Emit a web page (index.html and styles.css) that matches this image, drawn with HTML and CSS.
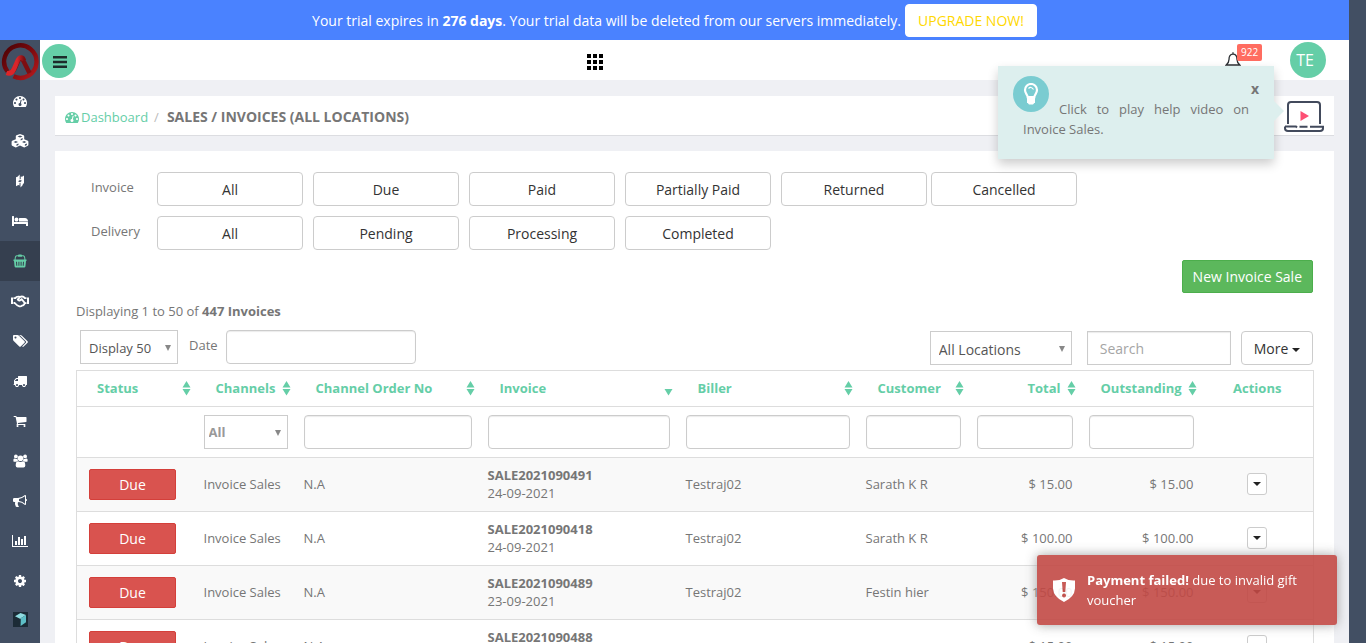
FILE: index.html
```html
<!DOCTYPE html>
<html lang="en">
<head>
<meta charset="utf-8">
<title>Sales / Invoices</title>
<link rel="stylesheet" href="styles.css">
</head>
<body>
<svg class="defs" aria-hidden="true">
  <symbol id="tach" viewBox="0 0 1792 1792"><path d="M384 1152q0-53-37.500-90.500t-90.500-37.500-90.500 37.500-37.500 90.500 37.500 90.500 90.500 37.500 90.500-37.500 37.500-90.500zm192-448q0-53-37.500-90.500t-90.500-37.500-90.500 37.500-37.500 90.500 37.500 90.500 90.500 37.500 90.500-37.500 37.500-90.500zm428 481l101-382q6-26-7.500-48.500t-38.500-29.500-48 6.500-30 39.500l-101 382q-60 5-107 43.500t-63 98.500q-20 77 20 146t117 89 146-20 89-117q16-60-6-117t-72-91zm660-33q0-53-37.500-90.500t-90.500-37.500-90.500 37.500-37.500 90.500 37.500 90.500 90.500 37.500 90.500-37.500 37.500-90.500zm-640-640q0-53-37.500-90.500t-90.500-37.500-90.500 37.500-37.500 90.500 37.500 90.500 90.500 37.500 90.500-37.500 37.500-90.500zm448 192q0-53-37.500-90.500t-90.500-37.500-90.500 37.500-37.500 90.500 37.500 90.500 90.500 37.500 90.500-37.500 37.500-90.500zm320 448q0 261-141 483-19 29-54 29h-1402q-35 0-54-29-141-221-141-483 0-182 71-348t191-286 286-191 348-71 348 71 286 191 191 286 71 348z"/></symbol>
  <symbol id="sort" viewBox="0 0 9 16"><path d="M4.500 1 8.500 7.500h-8zM.500 9h8l-4 6.500z"/></symbol>
  <symbol id="sort-desc" viewBox="0 0 9 16"><path d="M.500 9h8l-4 6.500z"/></symbol>
</svg>

<div class="page">
  <div class="trial">
    <p>Your trial expires in <b>276 days</b>. Your trial data will be deleted from our servers immediately.</p>
    <a class="upgrade" href="#">UPGRADE NOW!</a>
  </div>

  <div class="shell">
    <nav class="sidebar" aria-label="Main">
      <a class="logo" href="#" aria-label="Home">
        <svg viewBox="0 0 40 40" width="40" height="40">
          <defs>
            <linearGradient id="ring" x1="0" x2="1" y1="0" y2="1"><stop offset="0" stop-color="#4a0205"/><stop offset=".5" stop-color="#7c0a0e"/><stop offset="1" stop-color="#b81a1e"/></linearGradient>
            <linearGradient id="leg" x1="0" x2="1"><stop offset="0" stop-color="#e02327"/><stop offset=".6" stop-color="#d9262b"/><stop offset="1" stop-color="#7d0e11"/></linearGradient>
          </defs>
          <path d="M7.500 30.500A16.200 16.200 0 1 1 13.500 35.300" fill="none" stroke="url(#ring)" stroke-width="4.400"/>
          <path d="M9 31q3.500 1.500 6-4l3-7q2.500-5 5.500 0l6 12" fill="none" stroke="#7d0e11" stroke-width="4.500"/>
          <path d="M6.500 32q5 1.800 7.500-4l3.500-8q1.700-4 4-3.500 1.500.3 2.500 3" fill="none" stroke="url(#leg)" stroke-width="4.500"/>
        </svg>
      </a>
      <a href="#" aria-label="Dashboard"><svg width="14" height="14"><use href="#tach"/></svg></a>
      <a href="#" aria-label="Products"><svg viewBox="0 0 18 16" width="18" height="16"><path fill-rule="evenodd" d="M9 1l3.600 1.300q.6.300.6 1v3l3.600 1.500q.6.300.6 1v3q0 .7-.6 1l-3 1.500q-.6.300-1.200 0L9 12.500l-3.600 1.800q-.6.300-1.200 0l-3-1.500q-.6-.3-.6-1v-3q0-.7.6-1l3.600-1.500v-3q0-.7.6-1zM9 2.500 6.500 3.500 9 4.600l2.500-1.100zM9.700 7.400l2-.9V5l-2 .9zM4.800 8 2.600 9l2.200 1L7 9zM5.500 12.900l2-1v-1.500l-2 .9zM13.200 8 11 9l2.200 1 2.200-1zM13.900 12.900l2-1v-1.500l-2 .9z"/></svg></a>
      <a href="#" aria-label="Transfers"><svg viewBox="0 0 10 14" width="10" height="14"><path fill-rule="evenodd" d="M1 3.200 2.500 2.700 4.700.5v5l1-.6V2.500L7 2.800 9 1.500v7.700L7.800 10v1L5.500 13.500V8.700l-1 .6v2.200L3.300 11 1 12.200zM5 5.900 3 7.200 5 8.200 7 6.800z"/></svg></a>
      <a href="#" aria-label="Rooms"><svg viewBox="0 0 2048 1792" width="16" height="14"><path d="M256 1024h1728q26 0 45 19t19 45v448h-256v-256h-1536v256h-256v-1216q0-26 19-45t45-19h128q26 0 45 19t19 45v704zm576-320q0-106-75-181t-181-75-181 75-75 181 75 181 181 75 181-75 75-181zm1216 256v-64q0-159-112.500-271.500t-271.500-112.500h-704q-26 0-45 19t-19 45v384h1152z"/></svg></a>
      <a href="#" class="active" aria-label="Sales"><svg viewBox="0 0 14 14" width="14" height="14"><path fill-rule="evenodd" d="M1.600 5.500Q1.600 1.200 4 1.200h1Q5 .500 6 .500h2q1 0 1 .7h1q2.400 0 2.400 4.300h1.100v1.500h-.5l-.6 5.500q-.1 1-1.200 1H2.800q-1 0-1.200-1L1 7H.5V5.500zM2.600 5.500h8.800Q11.300 2.200 10 2.200H9V2.700H5V2.200H4Q2.700 2.200 2.600 5.500zM3 7.800l.3 4h1L4 7.800zM5.400 7.800v4h1v-4zM7.600 7.800v4h1v-4zM10 7.800l-.3 4h1l.3-4z"/></svg></a>
      <a href="#" aria-label="Partners"><svg viewBox="0 0 18 14" width="18" height="14"><path d="M0 3.500h2v6.500H0zM16 3.500h2V10h-2z"/><path d="M2.500 4.200h1.800Q5.500 2 9 2.800 12.500 1.800 13.800 4.200h1.700M2.500 9h1.200q2.300 2.700 4.700 3.300 1.600.4 2.600-.7 2.200 0 2.600-2.400h1.900M9 3.200 6.800 5.400q.6 1.600 2.400.9l1.500-1.100 3 3.700" fill="none" stroke="#fff" stroke-width="1.800"/></svg></a>
      <a href="#" aria-label="Offers"><svg viewBox="0 0 1920 1792" width="15" height="14"><path d="M448 448q0-53-37.500-90.500t-90.500-37.500-90.500 37.500-37.500 90.500 37.500 90.500 90.500 37.500 90.500-37.500 37.500-90.500zm1067 576q0 53-37 90l-491 492q-39 37-91 37-53 0-90-37l-715-716q-38-37-64.500-101t-26.500-117v-416q0-52 38-90t90-38h416q53 0 117 26.500t102 64.500l715 714q37 39 37 91zm384 0q0 53-37 90l-491 492q-39 37-91 37-36 0-59-14t-53-45l470-470q37-37 37-90 0-52-37-91l-715-714q-38-38-102-64.500t-117-26.500h224q53 0 117 26.500t102 64.500l715 714q37 39 37 91z"/></svg></a>
      <a href="#" aria-label="Shipping"><svg viewBox="0 0 1792 1792" width="14" height="14"><path d="M640 1408q0-52-38-90t-90-38-90 38-38 90 38 90 90 38 90-38 38-90zm-384-512h384v-256h-158q-13 0-22 9l-195 195q-9 9-9 22v30zm1280 512q0-52-38-90t-90-38-90 38-38 90 38 90 90 38 90-38 38-90zm256-1088v1024q0 15-4 26.500t-13.500 18.500-16.500 11.500-23.500 6-22.500 2-25.500 0-22.500-.5q0 106-75 181t-181 75-181-75-75-181h-384q0 106-75 181t-181 75-181-75-75-181h-64q-3 0-22.500.5t-25.500 0-22.500-2-23.500-6-16.500-11.500-13.500-18.500-4-26.500q0-26 19-45t45-19v-320q0-8-.5-35t0-38 2.500-34.500 6.500-37 14-30.500 22.500-30l198-198q19-19 50.500-32t58.500-13h160v-192q0-26 19-45t45-19h1024q26 0 45 19t19 45z"/></svg></a>
      <a href="#" aria-label="Purchases"><svg viewBox="0 0 1792 1792" width="14" height="14"><path d="M704 1536q0 52-38 90t-90 38-90-38-38-90 38-90 90-38 90 38 38 90zm896 0q0 52-38 90t-90 38-90-38-38-90 38-90 90-38 90 38 38 90zm128-1088v512q0 24-16.500 42.500t-40.500 21.500l-1044 122q13 60 13 70 0 16-24 64h920q26 0 45 19t19 45-19 45-45 19h-1024q-26 0-45-19t-19-45q0-11 8-31.500t16-36 21.500-40 15.500-29.500l-177-823h-204q-26 0-45-19t-19-45 19-45 45-19h256q16 0 28.500 6.500t19.500 15.500 13 24.500 8 26 5.500 29.500 4.500 26h1201q26 0 45 19t19 45z"/></svg></a>
      <a href="#" aria-label="Customers"><svg viewBox="0 0 15 14" width="15" height="14"><circle cx="2.900" cy="2.400" r="1.900"/><circle cx="12.100" cy="2.400" r="1.900"/><circle cx="7.500" cy="4.200" r="2.800"/><path d="M.5 7.500Q0 4.500 1.500 4.500q1.400.8 3 .2.100 1.300.7 2.100-1.200 0-1.900 1H1.500q-.8 0-1-.3zM14.500 7.500q.5-3-1-3-1.400.8-3 .2-.1 1.300-.7 2.100 1.200 0 1.900 1h1.800q.8 0 1-.3zM2.700 11.500q0-4.300 2.300-4.300 2.500 1.400 5 0 2.300 0 2.300 4.300 0 2-1.800 2h-6q-1.800 0-1.800-2z"/></svg></a>
      <a href="#" aria-label="Marketing"><svg viewBox="0 0 1792 1792" width="14" height="14"><path d="M1664 640q53 0 90.500 37.500t37.500 90.500-37.500 90.500-90.500 37.500v384q0 52-38 90t-90 38q-417-347-812-380-58 19-91 66t-31 100.500 40 92.500q-20 33-23 65.500t6 58 33.500 55 48 50 61.500 50.500q-29 58-111.500 83t-168.500 11.500-132-55.500q-7-23-29.500-87.500t-32-94.500-23-89-15-101 3.500-98.500 22-110.500h-122q-66 0-113-47t-47-113v-192q0-66 47-113t113-47h480q435 0 896-384 52 0 90 38t38 90v384zm-128 604v-954q-394 302-768 343v270q377 42 768 341z"/></svg></a>
      <a href="#" aria-label="Reports"><svg viewBox="0 0 2048 1792" width="16" height="14"><path d="M640 896v512h-256v-512h256zm384-512v1024h-256v-1024h256zm1024 1152v128h-2048v-1536h128v1408h1920zm-640-896v768h-256v-768h256zm384-384v1152h-256v-1152h256z"/></svg></a>
      <a href="#" aria-label="Settings"><svg viewBox="0 0 1792 1792" width="14" height="14"><path d="M1152 896q0-106-75-181t-181-75-181 75-75 181 75 181 181 75 181-75 75-181zm512-109v222q0 12-8 23t-20 13l-185 28q-19 54-39 91 35 50 107 138 10 12 10 25t-9 23q-27 37-99 108t-94 71q-12 0-26-9l-138-108q-44 23-91 38-16 136-29 186-7 28-36 28h-222q-14 0-24.500-8.500t-11.500-21.500l-28-184q-49-16-90-37l-141 107q-10 9-25 9-14 0-25-11-126-114-165-168-7-10-7-23 0-12 8-23 15-21 51-66.500t54-70.500q-27-50-41-99l-183-27q-13-2-21-12.500t-8-23.500v-222q0-12 8-23t19-13l186-28q14-46 39-92-40-57-107-138-10-12-10-24 0-10 9-23 26-36 98.500-107.500t94.500-71.500q13 0 26 10l138 107q44-23 91-38 16-136 29-186 7-28 36-28h222q14 0 24.500 8.500t11.500 21.500l28 184q49 16 90 37l142-107q9-9 24-9 13 0 25 10 129 119 165 170 7 8 7 22 0 12-8 23-15 21-51 66.500t-54 70.500q26 50 41 98l183 28q13 2 21 12.500t8 23.500z"/></svg></a>
      <a href="#" aria-label="Apps"><svg viewBox="0 0 15 15" width="15" height="15"><path fill="#1c2b36" d="M0 0h15v15H0z"/><path fill="#8fdbe0" d="M2 4.200 7.500 1 13 3 7.800 6.300 7.500 7z"/><path fill="#5dbec6" d="M7.800 6.300 13 3v7.200L7.600 14z"/></svg></a>
    </nav>

    <div class="content">
      <header class="topbar">
        <button class="menu" aria-label="Toggle menu"><svg viewBox="0 0 14 12" width="14" height="12"><path d="M0 0h14v2.500H0zM0 4.800h14v2.500H0zM0 9.600h14v2.400H0z" fill="#1d2b2a"/></svg></button>
        <button class="apps" aria-label="Apps"><svg viewBox="0 0 16 16" width="16" height="16"><path d="M0 0h4v4H0zM6 0h4v4H6zM12 0h4v4h-4zM0 6h4v4H0zM6 6h4v4H6zM12 6h4v4h-4zM0 12h4v4H0zM6 12h4v4H6zM12 12h4v4h-4z"/></svg></button>
        <div class="user">
          <button class="bell" aria-label="Notifications">
            <svg viewBox="0 0 16 18" width="16" height="18"><path d="M8 3.200C4.800 3.200 4 6 4 8.500S3 12.500 1.200 14h13.600C13 12.500 12 11 12 8.500S11.200 3.200 8 3.200zM8 1.200v2" fill="none" stroke="#2b2f33" stroke-width="1.300"/></svg>
            <span class="badge">922</span>
          </button>
          <button class="avatar">TE</button>
        </div>
      </header>

      <main class="main">
        <div class="crumbs">
          <a href="#"><svg width="14" height="14"><use href="#tach"/></svg> Dashboard</a>
          <span class="slash">/</span>
          <h1>SALES / INVOICES (ALL LOCATIONS)</h1>
          <div class="help">
            <button class="video" aria-label="Play help video"><svg viewBox="0 0 40 32" width="40" height="32"><g fill="none" stroke="#424a5c" stroke-width="2"><path d="M4 24V5q0-3 3-3h26q3 0 3 3v19M1 26.500h11l1 1h0M15.500 26.700h8M26 26.700h13v1.500q0 2.800-3 2.800H4q-3 0-3-2.800v-1.700"/></g><path d="M16.500 11v10l8.500-5z" fill="#fd4f74"/></svg></button>
            <div class="tip" role="dialog">
              <span class="bulb"><svg viewBox="0 0 16 22" width="16" height="22"><path d="M4.700 14.200C4.700 11.800 2 10.500 2 7a6 6 0 0 1 12 0c0 3.500-2.700 4.800-2.700 7.200z" fill="none" stroke="#fff" stroke-width="2.200"/><path d="M4 14h8v5.200L10 21.500H6L4 19.200z" fill="#fff"/><path d="M5.500 5.500Q8 3 10.500 6.500" fill="none" stroke="#fff" stroke-width="1.200"/></svg></span>
              <button class="close">x</button>
              <p>Click to play help video on Invoice Sales.</p>
            </div>
          </div>
        </div>

        <section class="panel">
          <div class="filters">
            <div class="filter">
              <span class="name">Invoice</span>
              <div class="set"><button>All</button><button>Due</button><button>Paid</button><button>Partially Paid</button><button>Returned</button></div>
              <button>Cancelled</button>
            </div>
            <div class="filter">
              <span class="name">Delivery</span>
              <div class="set"><button>All</button><button>Pending</button><button>Processing</button><button>Completed</button></div>
            </div>
          </div>
          <div class="create"><button>New Invoice Sale</button></div>
          <p class="count">Displaying 1 to 50 of <b>447 Invoices</b></p>
          <div class="tools">
            <div class="left">
              <span class="pick size"><select aria-label="Page size"><option>Display 50</option></select></span>
              <label for="date">Date</label>
              <input class="field date" id="date" type="text">
            </div>
            <div class="right">
              <span class="pick location"><select aria-label="Location"><option>All Locations</option></select></span>
              <input class="field search" type="text" placeholder="Search" aria-label="Search">
              <button class="more">More <i class="caret"></i></button>
            </div>
          </div>

          <table class="grid">
            <colgroup><col class="c-status"><col class="c-channel"><col class="c-order"><col class="c-invoice"><col class="c-biller"><col class="c-customer"><col class="c-total"><col class="c-outstanding"><col class="c-actions"></colgroup>
            <thead>
              <tr class="heads">
                <th><span>Status<svg class="sort"><use href="#sort"/></svg></span></th>
                <th><span>Channels<svg class="sort"><use href="#sort"/></svg></span></th>
                <th><span>Channel Order No<svg class="sort"><use href="#sort"/></svg></span></th>
                <th><span>Invoice<svg class="sort"><use href="#sort-desc"/></svg></span></th>
                <th><span>Biller<svg class="sort"><use href="#sort"/></svg></span></th>
                <th><span>Customer<svg class="sort"><use href="#sort"/></svg></span></th>
                <th class="num"><span>Total<svg class="sort"><use href="#sort"/></svg></span></th>
                <th class="num"><span>Outstanding<svg class="sort"><use href="#sort"/></svg></span></th>
                <th class="act">Actions</th>
              </tr>
              <tr class="search-row">
                <td></td>
                <td><span class="pick channel"><select aria-label="Channel"><option>All</option></select></span></td>
                <td><input class="field" type="text" aria-label="Channel order no"></td>
                <td><input class="field" type="text" aria-label="Invoice"></td>
                <td><input class="field" type="text" aria-label="Biller"></td>
                <td><input class="field" type="text" aria-label="Customer"></td>
                <td><input class="field" type="text" aria-label="Total"></td>
                <td><input class="field" type="text" aria-label="Outstanding"></td>
                <td></td>
              </tr>
            </thead>
            <tbody>
              <tr><td><button class="due">Due</button></td><td>Invoice Sales</td><td>N.A</td><td><b>SALE2021090491</b><br>24-09-2021</td><td>Testraj02</td><td>Sarath K R</td><td class="num">$ 15.00</td><td class="num">$ 15.00</td><td class="act"><button class="drop" aria-label="Actions"><i class="caret"></i></button></td></tr>
              <tr><td><button class="due">Due</button></td><td>Invoice Sales</td><td>N.A</td><td><b>SALE2021090418</b><br>24-09-2021</td><td>Testraj02</td><td>Sarath K R</td><td class="num">$ 100.00</td><td class="num">$ 100.00</td><td class="act"><button class="drop" aria-label="Actions"><i class="caret"></i></button></td></tr>
              <tr><td><button class="due">Due</button></td><td>Invoice Sales</td><td>N.A</td><td><b>SALE2021090489</b><br>23-09-2021</td><td>Testraj02</td><td>Festin hier</td><td class="num">$ 150.00</td><td class="num">$ 150.00</td><td class="act"><button class="drop" aria-label="Actions"><i class="caret"></i></button></td></tr>
              <tr><td><button class="due">Due</button></td><td>Invoice Sales</td><td>N.A</td><td><b>SALE2021090488</b><br>23-09-2021</td><td></td><td></td><td class="num">$ 15.00</td><td class="num">$ 15.00</td><td class="act"><button class="drop" aria-label="Actions"><i class="caret"></i></button></td></tr>
            </tbody>
          </table>
        </section>
      </main>
    </div>
  </div>
</div>

<div class="toast" role="alert">
  <svg viewBox="0 0 22 24" width="22" height="24"><path fill="#fff" fill-rule="evenodd" d="M11 0q5 3 11 2.500v8Q21.500 19 11 24 .5 19 0 10.500v-8Q6 3 11 0zM9 4l.7 10h2.600L13 4zM11 15.500a2 2 0 1 0 .1 0z"/></svg>
  <p><b>Payment failed!</b> due to invalid gift voucher</p>
</div>
</body>
</html>
```
FILE: styles.css
```css
* { box-sizing: border-box; }

body {
  margin: 0;
  background: #424f63;
  color: #767676;
  font: 13px/18px "Open Sans", "Noto Sans", sans-serif;
}

p, h1 { margin: 0; }
a { color: #65cea7; text-decoration: none; }
svg { display: block; }
button, input, select { font-family: inherit; margin: 0; }
button { cursor: pointer; }
.defs { position: absolute; width: 0; height: 0; }

.page {
  height: 100vh;
  margin-right: 17px;
  overflow: hidden;
}

/* Trial banner */
.trial {
  display: flex;
  justify-content: center;
  align-items: center;
  gap: 4px;
  height: 40px;
  background: #4a82ff;
  color: #fff;
  font-size: 14px;
}
.trial p { padding-top: 2px; }
.upgrade {
  padding: 6px 12px;
  border: 1px solid #fff;
  border-radius: 4px;
  background: #fff;
  color: #ffd800;
  line-height: 19px;
}

.shell { display: flex; }

/* Sidebar */
.sidebar {
  flex: none;
  width: 40px;
  min-height: 100vh;
  background: #424f63;
}
.sidebar a {
  display: flex;
  justify-content: center;
  align-items: center;
  height: 40px;
  fill: #fff;
}
.sidebar .logo { height: 41px; }
.sidebar .active { background: #353f4f; fill: #65cea7; }
.sidebar a:last-child { height: 36px; }

.content {
  flex: 1;
  min-width: 0;
  background: #eff0f4;
}

/* Top bar */
.topbar {
  display: flex;
  align-items: flex-end;
  height: 40px;
  padding: 0 23px 2px 2px;
  background: #fff;
}
.topbar button { padding: 0; border: 0; background: none; }
.topbar .menu {
  display: grid;
  place-items: center;
  width: 34px;
  height: 34px;
  padding: 2px 0 0 2px;
  border-radius: 50%;
  background: #65cea7;
}
.topbar .apps { margin-left: 39.8%; padding-bottom: 8px; }
.user { display: flex; align-items: center; gap: 49px; margin-left: auto; }
.bell { position: relative; }
.badge {
  position: absolute;
  left: 12px;
  top: -7px;
  padding: 0 4px;
  border-radius: 2px;
  background: #ff6c60;
  color: #fff;
  font-size: 10px;
  line-height: 17px;
}
.topbar .avatar {
  width: 36px;
  height: 36px;
  padding-right: 6px;
  border-radius: 50%;
  background: #65cea7;
  color: #fff;
  font-size: 16px;
}

.main { padding: 16px 15px 0; }

/* Breadcrumb */
.crumbs {
  display: flex;
  align-items: center;
  height: 40px;
  padding: 2px 10px 0;
  border-bottom: 1px solid #dcdde1;
  background: #fff;
}
.crumbs a { display: flex; align-items: center; gap: 2px; fill: #65cea7; }
.slash { padding: 0 8px 0 6px; color: #bbb; }
.crumbs h1 { font-size: 14px; line-height: 18px; }
.help { position: relative; margin-left: auto; }
.video { display: block; margin-bottom: 2px; padding: 0; border: 0; background: none; }

.tip {
  position: absolute;
  right: 50px;
  top: -34px;
  width: 276px;
  height: 93px;
  padding: 10px 15px;
  background: #ddefee;
  box-shadow: 0 5px 10px rgba(0, 0, 0, .2);
  z-index: 2;
}
.tip::after {
  content: "";
  position: absolute;
  left: 100%;
  top: 35px;
  border: solid transparent;
  border-width: 10px 0 10px 10px;
  border-left-color: #ddefee;
}
.bulb {
  float: left;
  display: grid;
  place-items: center;
  width: 36px;
  height: 36px;
  margin-right: 10px;
  border-radius: 50%;
  background: #7accd1;
}
.close {
  float: right;
  padding: 0;
  border: 0;
  background: none;
  color: #767676;
  font-size: 14px;
  font-weight: 700;
  line-height: 26px;
}
.tip p {
  padding: 23px 10px 0;
  line-height: 20px;
  text-align: justify;
}

/* Panel */
.panel { margin-top: 15px; padding: 21px 21px 0; background: #fff; }
.filters { display: grid; gap: 10px; padding-left: 15px; }
.filter { display: flex; gap: 4px; }
.name { width: 62px; line-height: 30px; }
.set { display: flex; gap: 10px; }
.filter button {
  width: 146px;
  height: 34px;
  padding: 0;
  border: 1px solid #ccc;
  border-radius: 4px;
  background: #fff;
  color: #333;
  font-size: 14px;
}
.create { display: flex; justify-content: flex-end; padding-top: 10px; }
.create button {
  height: 33px;
  padding: 0 10px;
  border: 1px solid #4cae4c;
  border-radius: 2px;
  background: #5cb85c;
  color: #fff;
  font-size: 14px;
}
.count { padding-top: 9px; }

.tools {
  display: flex;
  justify-content: space-between;
  padding: 10px 0 5px 4px;
}
.left, .right { display: flex; }
.right { padding-top: 1px; }
.left label { padding: 0 8px 0 11px; line-height: 30px; }
.field {
  display: block;
  width: 100%;
  height: 34px;
  padding: 0 12px;
  border: 1px solid #ccc;
  border-radius: 4px;
  background: #fff;
  box-shadow: inset 0 1px 1px rgba(0, 0, 0, .08);
  color: #555;
  font-size: 14px;
}
.field::placeholder { color: #a5a5a5; opacity: 1; }
.date { width: 190px; }
.search { width: 144px; margin: 0 10px 0 15px; border-radius: 0; }
.pick { display: block; position: relative; height: 34px; }
.pick select {
  appearance: none;
  width: 100%;
  height: 34px;
  padding: 2px 8px 0;
  border: 1px solid #ccc;
  border-radius: 0;
  background: #fff;
  color: #555;
  font-size: 14px;
}
.pick::after {
  content: "";
  position: absolute;
  right: 7px;
  top: 15px;
  border: solid transparent;
  border-width: 6px 3px 0;
  border-top-color: #888;
  pointer-events: none;
}
.size { width: 98px; }
.size select { font-size: 13px; }
.location { width: 142px; }
.channel select { padding: 0 4px; color: #999; font-size: 13px; font-weight: 700; }
.more {
  height: 34px;
  padding: 0 12px;
  border: 1px solid #ccc;
  border-radius: 4px;
  background: #fff;
  color: #333;
  font-size: 14px;
}
.caret {
  display: inline-block;
  border: solid transparent;
  border-width: 4px 4px 0;
  border-top-color: #222;
  vertical-align: middle;
}

/* Invoice table */
.grid {
  width: 100%;
  table-layout: fixed;
  border-collapse: collapse;
  border: 1px solid #ddd;
}
.c-status { width: 119px; }
.c-channel { width: 100px; }
.c-order { width: 184px; }
.c-invoice { width: 198px; }
.c-biller { width: 180px; }
.c-customer { width: 111px; }
.c-total { width: 112px; }
.c-outstanding { width: 121px; }
.c-actions { width: 112px; }
.grid tr { height: 54px; border-bottom: 1px solid #ddd; }
.grid .heads { height: 36px; }
.grid .search-row { height: 51px; }
.grid tbody tr:nth-child(odd) { background: #f9f9f9; }
.grid td { padding: 0 8px; }
.grid tbody td { padding-bottom: 2px; }
.grid tbody td:first-child { padding: 0 0 0 12px; }
.grid th { padding: 0 0 2px; color: #65cea7; text-align: left; white-space: nowrap; }
.grid th span { display: block; position: relative; padding: 0 20px; }
.sort {
  position: absolute;
  right: 5px;
  top: 1px;
  width: 9px;
  height: 16px;
  fill: #65cea7;
}
.grid .num { text-align: right; }
.grid .act { text-align: center; }
.due {
  width: 87px;
  height: 31px;
  border: 1px solid #d43f3a;
  border-radius: 2px;
  background: #d9534f;
  color: #fff;
  font-size: 14px;
}
.drop {
  display: inline-grid;
  place-items: center;
  width: 20px;
  height: 22px;
  padding: 0;
  border: 1px solid #ccc;
  border-radius: 3px;
  background: #fff;
  vertical-align: middle;
}

/* Toast */
.toast {
  position: fixed;
  right: 29px;
  bottom: 18px;
  display: flex;
  align-items: center;
  gap: 12px;
  width: 300px;
  padding: 15px 15px 15px 16px;
  border-radius: 3px;
  background: #c24a45;
  box-shadow: 0 0 12px #999;
  color: #fff;
  line-height: 20px;
  opacity: .9;
  z-index: 3;
}
.toast svg { flex: none; }
```
